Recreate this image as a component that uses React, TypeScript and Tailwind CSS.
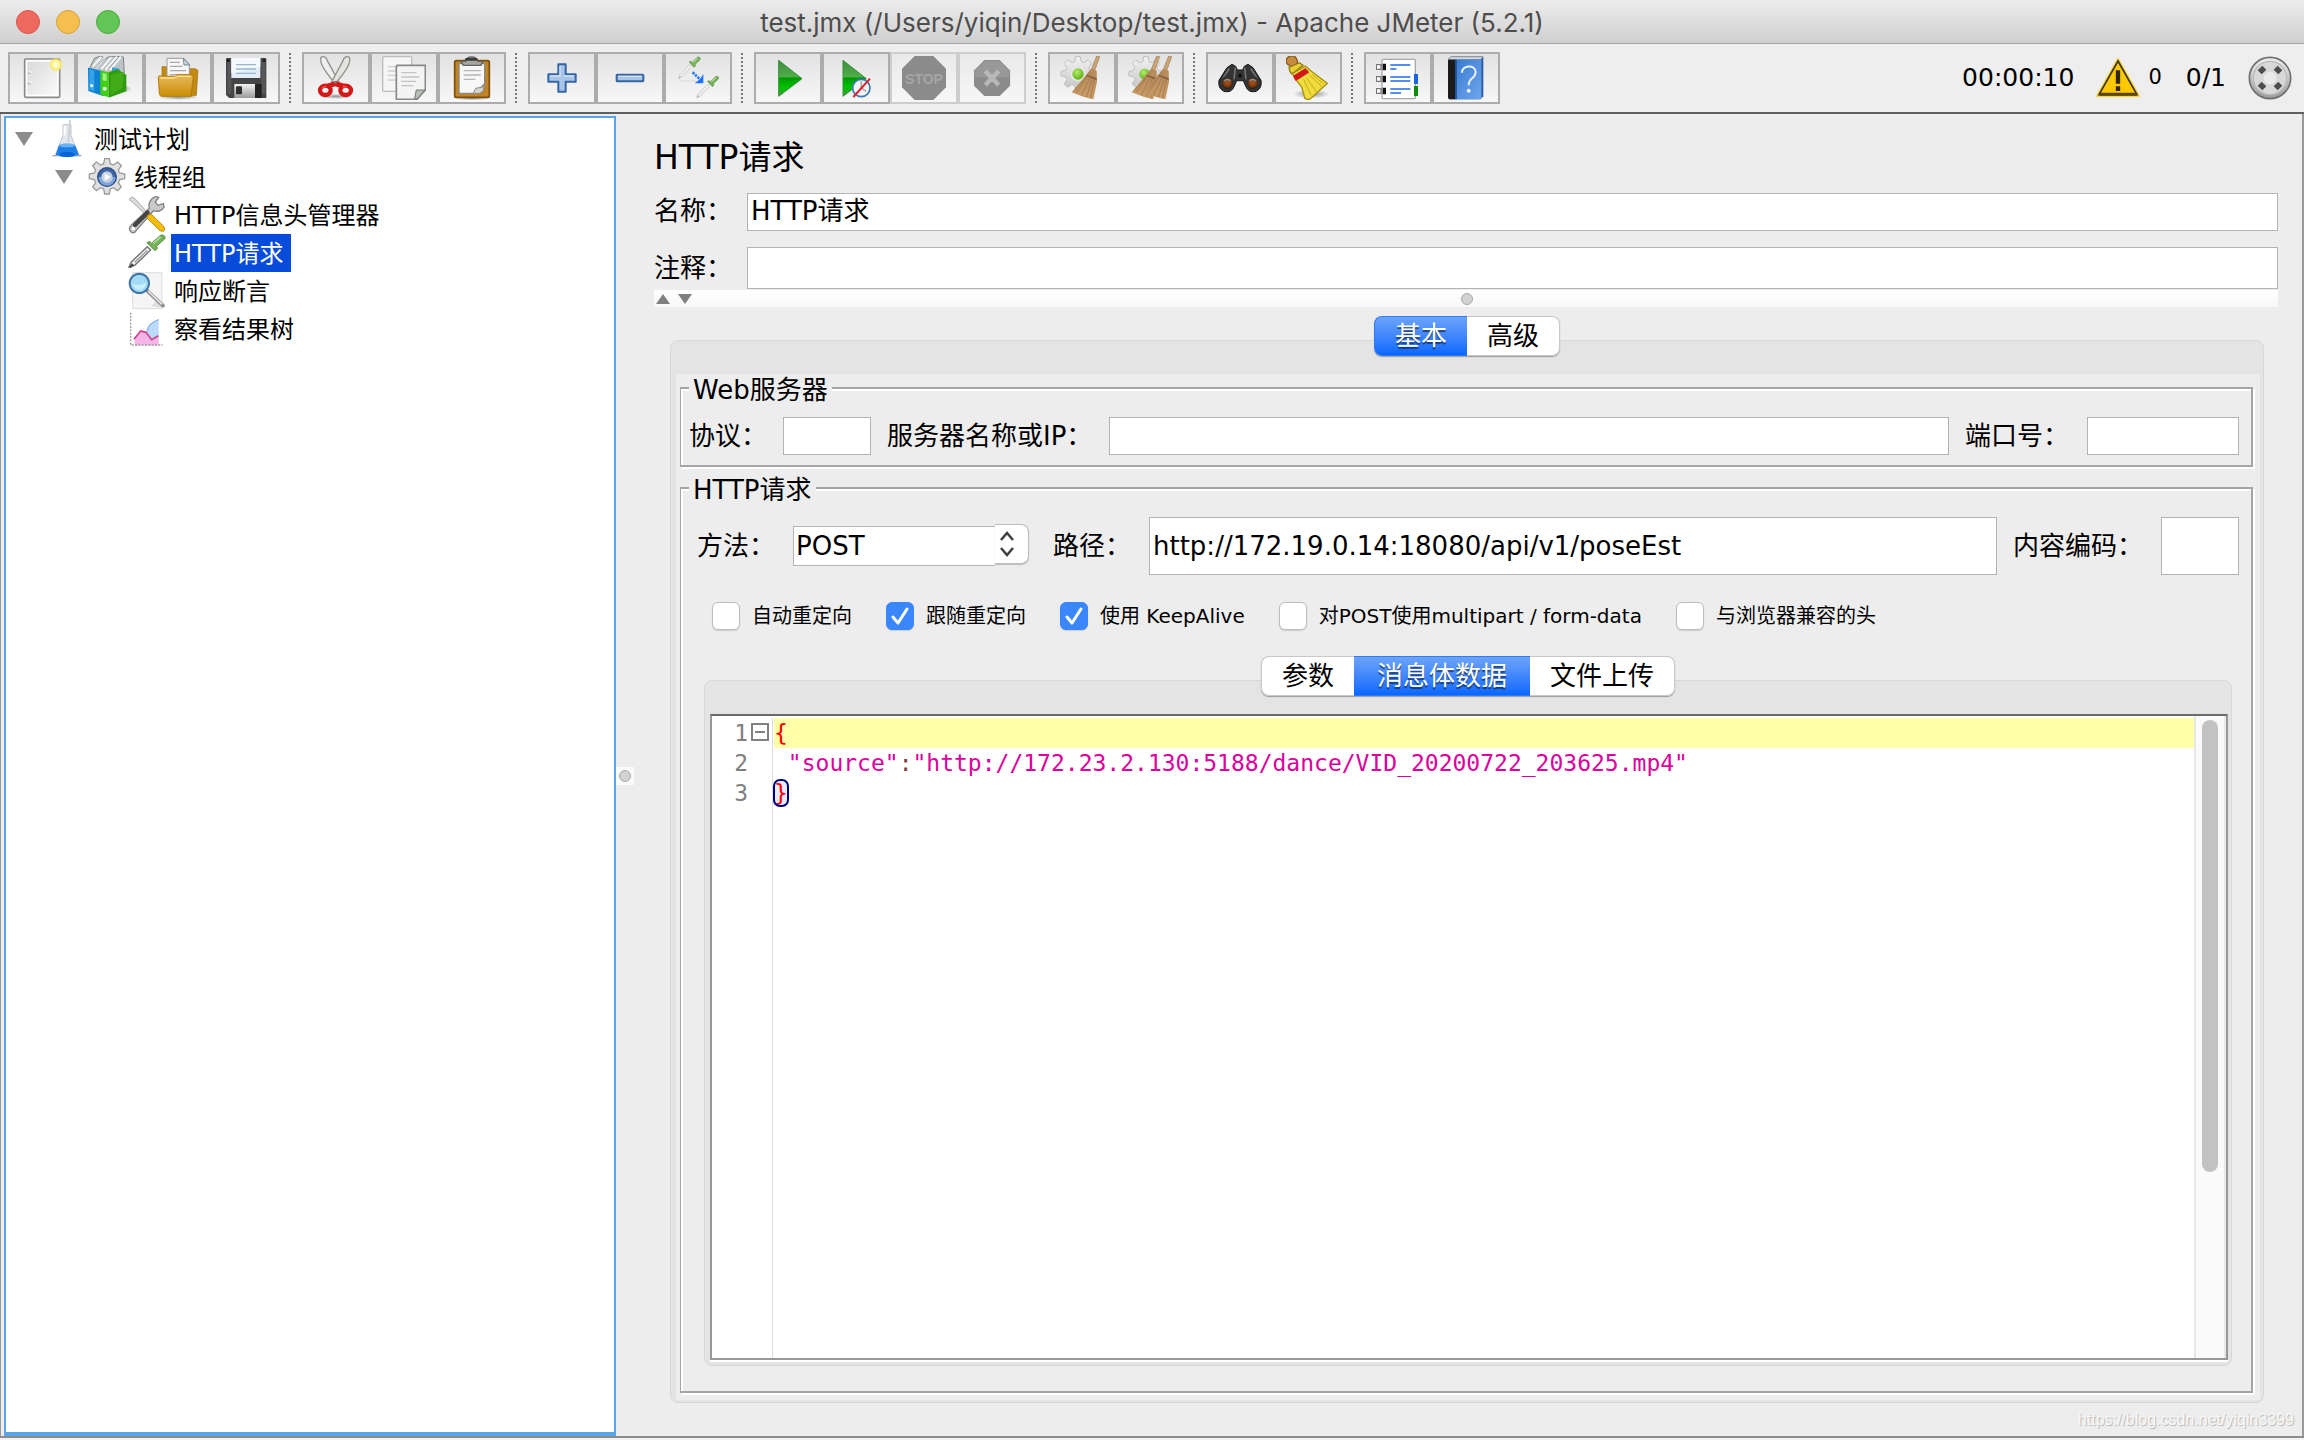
import { useState } from "react";
import type { ReactNode } from "react";

interface ToolItem {
  label: string;
  icon: ReactNode;
  disabled?: boolean;
}

interface TreeItem {
  label: string;
  indent: string;
  icon: ReactNode;
  open?: boolean;
}

const gear =
  "M50 2h14l3 15 9 4 13-9 11 11-9 13 4 9 15 3v14l-15 3-4 9 9 13-11 11-13-9-9 4-3 15H50l-3-15-9-4-13 9-11-11 9-13-4-9-15-3V48l15-3 4-9-9-13 11-11 13 9 9-4z";

const octagon = "M38 0h56l38 38v56l-38 38H38L0 94V38z";

function Svg({ children }: { children: ReactNode }) {
  return (
    <svg viewBox="0 0 132 132" className="size-11" aria-hidden="true">
      {children}
    </svg>
  );
}

// Shared gradients, referenced by id from the icons
function Gradients() {
  return (
    <svg className="absolute size-0" aria-hidden="true">
      <defs>
        <linearGradient id="paper" x1="0" y1="0" x2="1" y2="1">
          <stop offset="0" stopColor="#d9d9d9" />
          <stop offset="1" stopColor="#fafafa" />
        </linearGradient>
        <linearGradient id="folder" x1="0" y1="0" x2="0" y2="1">
          <stop offset="0" stopColor="#e9b95a" />
          <stop offset="1" stopColor="#c98f06" />
        </linearGradient>
        <linearGradient id="metal" x1="0" y1="0" x2="0" y2="1">
          <stop offset="0" stopColor="#f2f2f2" />
          <stop offset="1" stopColor="#9a9a9a" />
        </linearGradient>
        <linearGradient id="cog" x1="0" y1="0" x2="0" y2="1">
          <stop offset="0" stopColor="#f2f2f2" />
          <stop offset="1" stopColor="#c4c4c4" />
        </linearGradient>
        <linearGradient id="play" x1="0" y1="0" x2="0" y2="1">
          <stop offset="0" stopColor="#3f8a3c" />
          <stop offset="0.45" stopColor="#4fae4a" />
          <stop offset="0.5" stopColor="#009a00" />
          <stop offset="0.75" stopColor="#00c400" />
          <stop offset="1" stopColor="#3e9a36" />
        </linearGradient>
        <linearGradient id="straw" x1="0" y1="0" x2="0" y2="1">
          <stop offset="0" stopColor="#b58a5a" />
          <stop offset="1" stopColor="#c99b66" />
        </linearGradient>
        <linearGradient id="book" x1="0" y1="0" x2="1" y2="1">
          <stop offset="0" stopColor="#3a7bd0" />
          <stop offset="1" stopColor="#6ea6ee" />
        </linearGradient>
        <radialGradient id="ball" cx="0.4" cy="0.35" r="0.7">
          <stop offset="0" stopColor="#b4ee6a" />
          <stop offset="1" stopColor="#59ab10" />
        </radialGradient>
        <radialGradient id="lens" cx="0.5" cy="0.4" r="0.6">
          <stop offset="0" stopColor="#a85a22" />
          <stop offset="0.6" stopColor="#7a3a10" />
          <stop offset="1" stopColor="#1c1c1c" />
        </radialGradient>
        <radialGradient id="glow">
          <stop offset="0" stopColor="#fffef0" />
          <stop offset="0.45" stopColor="#fff9b0" />
          <stop offset="0.7" stopColor="#f7e85a" />
          <stop offset="1" stopColor="#f7e85a" stopOpacity="0" />
        </radialGradient>
        <radialGradient id="shade">
          <stop offset="0" stopColor="#000" stopOpacity="0.4" />
          <stop offset="1" stopColor="#000" stopOpacity="0" />
        </radialGradient>
      </defs>
    </svg>
  );
}

function Broom() {
  return (
    <g>
      <path d="M110 0l9 2-15 42-10-4z" fill="#c9a577" stroke="#a07c50" strokeWidth="2" />
      <path d="M93 38l17 6 1 34-11 52-30-8-35-13 29-35z" fill="url(#straw)" />
      <path d="M92 48L48 110M94 56L64 118M98 60L80 124M104 60L92 128M80 62L42 104" stroke="#9c7346" strokeWidth="2" />
      <path d="M80 58l30 12" stroke="#7d5a35" strokeWidth="4" />
    </g>
  );
}

function Pipette({ faded }: { faded?: boolean }) {
  return (
    <g>
      <path d="M3 99l7-15 48-46 10 10-48 46z" fill="#f4f4f4" stroke={faded ? "#c9c9c9" : "#707070"} strokeWidth="4" />
      <path d="M4 98l8-10 6 5-10 10z" fill={faded ? "#bbb" : "#444"} />
      <path d="M20 85l38-36" stroke={faded ? "#ddd" : "#999"} strokeWidth="4" />
      <path d="M57 26l24 24 8-8-4-5 25-22c5-9-6-15-14-10L70 28l-5-6z" fill="#77b25a" stroke="#578f3e" strokeWidth="3" />
      <path d="M76 28l22-20" stroke="#abd795" strokeWidth="6" />
    </g>
  );
}

const toolGroups: ToolItem[][] = [
  [
    {
      label: "New",
      icon: (
        <Svg>
          <rect x="14" y="9" width="105" height="115" rx="3" fill="#fff" stroke="#8b8b86" strokeWidth="5" />
          <rect x="22" y="17" width="89" height="99" fill="url(#paper)" />
          <path d="M24 51h8M24 82h8" stroke="#aaa" strokeWidth="5" />
          <path d="M28 48h6M28 79h6" stroke="#fff" strokeWidth="5" />
          <circle cx="108" cy="26" r="21" fill="url(#glow)" />
        </Svg>
      ),
    },
    {
      label: "Templates",
      icon: (
        <Svg>
          <ellipse cx="100" cy="98" rx="31" ry="13" fill="url(#shade)" />
          <path d="M6 34L20 6l20-6 12 8L68 0l38 3 3 48-44 8-60-16z" fill="#bfc3c5" stroke="#7d8589" strokeWidth="3" />
          <path d="M14 32l25-29M24 35L50 4M40 39L70 4M53 42l34-40M66 42l33-40" stroke="#f5f5f5" strokeWidth="6" />
          <path d="M23 34l25-27M61 38L91 5" stroke="#91999d" strokeWidth="3" />
          <path d="M0 35l30 7 17 4v75l-13-5-33-11z" fill="#0e82d3" />
          <path d="M4 40l15 4v62L4 101z" fill="#35a3ea" />
          <path d="M72 34l23 4v20l-23-4z" fill="#37a2e6" />
          <path d="M37 44l25 5v75l-25-8z" fill="#42cf17" />
          <path d="M62 49l26-9 27 16v50l-53 19z" fill="#2f9b0d" />
          <path d="M68 56l39-8-3 47-36 22z" fill="#48b31c" opacity=".7" />
          <path d="M44 51l12 3v22l-12-3z" fill="#a4f080" />
          <circle cx="11" cy="89" r="5" fill="#e3f6ff" />
          <circle cx="50" cy="98" r="6" fill="#e6ffe0" />
        </Svg>
      ),
    },
    {
      label: "Open",
      icon: (
        <Svg>
          <ellipse cx="68" cy="124" rx="62" ry="8" fill="url(#shade)" />
          <path d="M18 32h18v30H18zM92 38h26l8 5-5 75-20 3z" fill="#c28a10" stroke="#9a6c07" strokeWidth="2" />
          <path d="M33 7h51l16 18v45H33z" fill="#f6f6f6" stroke="#9b9b9b" strokeWidth="3" />
          <path d="M82 7l2 20h17z" fill="#c9d8df" stroke="#758891" strokeWidth="3" />
          <path d="M42 19h29M42 31h38M42 44h48M42 56h48" stroke="#aaa" strokeWidth="4" />
          <path d="M7 64c0-5 5-5 8-4l41 1 10-5h38l8 5-7 60H16c-4 0-5-6-6-10z" fill="url(#folder)" stroke="#b17c08" strokeWidth="3" />
          <path d="M13 66h39l12-5h40" fill="none" stroke="#ffdf96" strokeWidth="4" />
        </Svg>
      ),
    },
    {
      label: "Save",
      icon: (
        <Svg>
          <path d="M10 6h113q4 0 4 4v116H16l-10-9V10q0-4 4-4z" fill="#454548" />
          <path d="M10 9h12v105H10zM112 9h12v105h-12z" fill="#57575a" />
          <path d="M22 6h87v60H22z" fill="#e2edf8" />
          <path d="M22 6h87v26L22 52z" fill="#f3f9fe" />
          <path d="M36 26h60M36 39h60M36 52h60" stroke="#9bb7d0" strokeWidth="4" />
          <rect x="31" y="84" width="67" height="42" fill="url(#metal)" />
          <rect x="36" y="91" width="18" height="24" rx="3" fill="#2e2e30" />
          <path d="M93 84h20v42H93z" fill="#222" />
          <path d="M9 10h8v8H9zM116 10h8v8h-8z" fill="#19191a" />
        </Svg>
      ),
    },
  ],
  [
    {
      label: "Cut",
      icon: (
        <Svg>
          <ellipse cx="66" cy="121" rx="52" ry="8" fill="url(#shade)" />
          <path d="M21 4c8-5 17 0 19 10l35 64-11 4C49 65 13 26 21 4z" fill="#eee" stroke="#92928e" strokeWidth="4" />
          <path d="M106 4c-8-5-17 0-19 10L53 78l11 4c15-17 51-56 42-78z" fill="#e3e3e0" stroke="#92928e" strokeWidth="4" />
          <ellipse cx="34" cy="103" rx="16" ry="14" fill="none" stroke="#d31818" strokeWidth="13" />
          <ellipse cx="95" cy="103" rx="16" ry="14" fill="none" stroke="#d31818" strokeWidth="13" />
          <path d="M39 83l25-8 27 8-5 15-23-7-20 7z" fill="#d31818" />
          <path d="M24 95l12-4M86 91l12 3" stroke="#f14848" strokeWidth="5" />
          <circle cx="64" cy="79" r="4" fill="#7a7a7a" />
        </Svg>
      ),
    },
    {
      label: "Copy",
      icon: (
        <Svg>
          <rect x="2" y="2" width="87" height="104" rx="3" fill="#f5f5f5" stroke="#bdbdba" strokeWidth="4" />
          <path d="M17 32h50M17 45h40M17 58h50M17 72h40" stroke="#cfcfcf" strokeWidth="4" />
          <path d="M46 28h84v74l-25 28H43V31z" fill="#f4f4f4" stroke="#888884" strokeWidth="5" />
          <path d="M58 50h45M58 63h54M58 76h44M58 89h36" stroke="#c2c2c2" strokeWidth="4" />
          <path d="M129 102l-24 27-7-2 5-25z" fill="#b9bdb7" stroke="#777" strokeWidth="3" />
        </Svg>
      ),
    },
    {
      label: "Paste",
      icon: (
        <Svg>
          <ellipse cx="66" cy="127" rx="54" ry="6" fill="url(#shade)" />
          <rect x="14" y="14" width="104" height="110" rx="5" fill="#c08427" stroke="#7d4e09" strokeWidth="5" />
          <path d="M27 23h77v60l-28 29H27z" fill="#f7f7f7" stroke="#888" strokeWidth="4" />
          <path d="M104 83l-5 23-11 6H70l7-15 21-4z" fill="#d4d4d0" stroke="#8c8c89" strokeWidth="3" />
          <path d="M41 44h51M41 57h51M41 70h35" stroke="#b5b5b5" strokeWidth="4" />
          <path d="M33 16h14c3-18 32-18 36 0h15l-5 12H40z" fill="#a5a69f" stroke="#62635e" strokeWidth="4" />
          <path d="M49 10h30" stroke="#3b3c39" strokeWidth="8" strokeLinecap="round" />
        </Svg>
      ),
    },
  ],
  [
    {
      label: "Expand All",
      icon: (
        <Svg>
          <path d="M55 25h22v30h30v22H77v30H55V77H25V55h30z" fill="#a9c6e8" stroke="#3465a4" strokeWidth="6" strokeLinejoin="round" />
          <path d="M60 31v29H31M72 60h29" fill="none" stroke="#d3e2f4" strokeWidth="4" />
        </Svg>
      ),
    },
    {
      label: "Collapse All",
      icon: (
        <Svg>
          <rect x="26" y="56" width="80" height="20" rx="2" fill="#a9c6e8" stroke="#3465a4" strokeWidth="6" />
          <path d="M31 61h70" stroke="#d3e2f4" strokeWidth="4" />
        </Svg>
      ),
    },
    {
      label: "Toggle",
      icon: (
        <Svg>
          <path d="M10 74h53" stroke="#e3e3e3" strokeWidth="5" />
          <g transform="translate(5 1) scale(.61 .66)">
            <Pipette faded />
          </g>
          <g transform="translate(60 59) scale(.61 .66)">
            <Pipette faded />
          </g>
          <path d="M50 49l22 21" stroke="#237cf2" strokeWidth="8" strokeDasharray="7 3" />
          <path d="M82 54v28H56l10-8 9-9z" fill="#1e6fff" />
        </Svg>
      ),
    },
  ],
  [
    {
      label: "Start",
      icon: (
        <Svg>
          <path d="M38 13v108l70-53z" fill="url(#play)" stroke="#35923a" strokeWidth="3" />
        </Svg>
      ),
    },
    {
      label: "Start no pauses",
      icon: (
        <Svg>
          <path d="M27 13v108l70-53z" fill="url(#play)" stroke="#35923a" strokeWidth="3" />
          <circle cx="82" cy="96" r="26" fill="#f3f6fa" stroke="#3d79b8" strokeWidth="5" />
          <path d="M82 76v20l14 10" fill="none" stroke="#aaa" strokeWidth="5" />
          <path d="M58 123l50-55" stroke="#dd2127" strokeWidth="6" />
        </Svg>
      ),
    },
    {
      label: "Stop",
      disabled: true,
      icon: (
        <Svg>
          <path d={octagon} fill="#8b8b8b" />
          <text x="66" y="83" textAnchor="middle" fontFamily="Liberation Sans" fontWeight="bold" fontSize="42" fill="#a6a6a6">
            STOP
          </text>
        </Svg>
      ),
    },
    {
      label: "Shutdown",
      disabled: true,
      icon: (
        <Svg>
          <g transform="translate(12 12) scale(.82)">
            <path d={octagon} fill="#8b8b8b" />
            <path d="M4 64h124V38L94 4H38L4 38z" fill="#989898" />
          </g>
          <path d="M46 45l40 42M86 45L46 87" stroke="#b8b8b8" strokeWidth="14" />
        </Svg>
      ),
    },
  ],
  [
    {
      label: "Clear",
      icon: (
        <Svg>
          <path d={gear} fill="url(#cog)" stroke="#bdbdbd" strokeWidth="3" transform="translate(-1 0) scale(.96)" />
          <circle cx="54" cy="54" r="22" fill="#e8e8e8" />
          <circle cx="54" cy="54" r="17" fill="url(#ball)" />
          <Broom />
        </Svg>
      ),
    },
    {
      label: "Clear All",
      icon: (
        <Svg>
          <path d={gear} fill="url(#cog)" stroke="#bdbdbd" strokeWidth="3" transform="translate(-1 0) scale(.96)" />
          <circle cx="50" cy="54" r="16" fill="url(#ball)" />
          <g transform="translate(-24 0)">
            <Broom />
          </g>
          <g transform="translate(12 0)">
            <Broom />
          </g>
        </Svg>
      ),
    },
  ],
  [
    {
      label: "Search",
      icon: (
        <Svg>
          <path d="M27 35l15-10 11 6 5 11h16l5-11 11-6 15 10 24 38q4 24-15 33-23 6-31-16l-7-16H56l-7 16q-8 22-31 16Q-1 97 3 73z" fill="#343434" stroke="#171717" strokeWidth="3" />
          <path d="M34 37l-20 31M98 37l20 31M52 35l-4 35M80 35l4 35" stroke="#747474" strokeWidth="5" />
          <circle cx="28" cy="83" r="23" fill="#333" />
          <circle cx="104" cy="83" r="23" fill="#333" />
          <circle cx="28" cy="83" r="16" fill="url(#lens)" />
          <circle cx="104" cy="83" r="16" fill="url(#lens)" />
          <path d="M18 75q10-9 20 0M94 75q10-9 20 0" fill="none" stroke="#929292" strokeWidth="4" />
          <circle cx="66" cy="59" r="6" fill="#111" />
        </Svg>
      ),
    },
    {
      label: "Reset Search",
      icon: (
        <Svg>
          <ellipse cx="76" cy="114" rx="56" ry="14" fill="url(#shade)" />
          <path d="M4 5Q16-5 29 4q9 13 3 19l7 6-21 13-7-14C-2 25 0 12 4 5z" fill="#c68b43" stroke="#8a5a1b" strokeWidth="4" />
          <path d="M9 34L40 20l11 8-33 26-6-7z" fill="#e9cf35" stroke="#8c7b0d" strokeWidth="4" />
          <path d="M20 52l38-22 18 16 48 36-54 49-13-3-10-35-20-25z" fill="#f1dc3e" stroke="#a5900f" strokeWidth="4" />
          <path d="M70 57l37 34M61 65l30 42M53 70l22 48M79 56l34 28" stroke="#c7ac1a" strokeWidth="3" />
          <path d="M23 64l38-24M27 71l40-25" stroke="#d21919" strokeWidth="9" />
        </Svg>
      ),
    },
  ],
  [
    {
      label: "Function Helper",
      icon: (
        <Svg>
          <rect x="18" y="10" width="100" height="118" rx="3" fill="#fff" stroke="#a8a8a8" strokeWidth="4" />
          <path d="M114 54h12v30h-12z" fill="#1766e8" />
          <path d="M114 90h12v30h-12z" fill="#0b8f0b" />
          <path d="M20 23h10v20H20zM20 59h10v20H20zM20 95h10v20H20z" fill="#111" />
          <path d="M1 26h14v14H1zM1 62h14v14H1zM1 98h14v14H1z" fill="#fff" stroke="#777" strokeWidth="4" />
          <path d="M43 27h60M43 39h18M43 63h60M43 75h60M43 99h60M43 111h32" stroke="#1b6bea" strokeWidth="5" />
        </Svg>
      ),
    },
    {
      label: "Help",
      icon: (
        <Svg>
          <path d="M14 8l8-6h96v119l-9 9H14z" fill="#2c5da5" />
          <path d="M14 8l8-6h94l-5 9H14z" fill="#d3d7dc" stroke="#6a7480" strokeWidth="2" />
          <path d="M12 11h26v119H16l-4-5z" fill="#1b1b1d" />
          <path d="M34 11h78v119H34z" fill="url(#book)" />
          <path d="M36 12v117" stroke="#1e4e92" strokeWidth="5" />
          <path d="M54 50c0-24 41-25 41-2 0 20-21 16-21 40" fill="none" stroke="#e9f2fd" strokeWidth="6" />
          <circle cx="74" cy="104" r="6" fill="#e9f2fd" />
        </Svg>
      ),
    },
  ],
];

const treeItems: TreeItem[] = [
  {
    label: "测试计划",
    indent: "pl-[9px]",
    open: true,
    icon: (
      <svg viewBox="0 0 114 114" className="size-[38px]" aria-hidden="true">
        <path d="M14 107h86" stroke="#9aa3ad" strokeWidth="4" />
        <path d="M45 14h24v32l22 57q-35 15-68 0l22-57z" fill="#e4e8ee" stroke="#bfc6cf" strokeWidth="3" />
        <path d="M33 75h48l12 29q-36 14-70 0z" fill="#1f7fe8" />
        <ellipse cx="57" cy="76" rx="25" ry="6" fill="#6db2f5" />
        <ellipse cx="57" cy="103" rx="23" ry="8" fill="#0663d8" />
        <path d="M66 0l-5 66" stroke="#cdcdcd" strokeWidth="5" />
        <path d="M50 18v28" stroke="#fff" strokeWidth="6" />
      </svg>
    ),
  },
  {
    label: "线程组",
    indent: "pl-[49px]",
    open: true,
    icon: (
      <svg viewBox="0 0 114 114" className="size-[38px]" aria-hidden="true">
        <path d={gear} fill="#e0e0e0" stroke="#9c9c9c" strokeWidth="4" />
        <circle cx="57" cy="57" r="28" fill="#3d63a3" />
        <path d="M29 57a28 28 0 0 0 56 0z" fill="#7fa6dc" />
        <circle cx="57" cy="57" r="17" fill="#c8d3e2" />
        <path d="M50 46l18 11-18 11z" fill="#fff" />
        <circle cx="57" cy="57" r="28" fill="none" stroke="#2c4d85" strokeWidth="4" />
      </svg>
    ),
  },
  {
    label: "HTTP信息头管理器",
    indent: "pl-[122px]",
    icon: (
      <svg viewBox="0 0 114 114" className="size-[38px]" aria-hidden="true">
        <path d="M3 10l8-7 10 5 43 48-5 6L14 19z" fill="#dadada" stroke="#a9a9a9" strokeWidth="3" />
        <path d="M6 104c-4-7 0-13 5-18l53-49c-4-15 4-31 19-35l9 2-10 14 7 10 17-5 2 11c-7 11-20 15-31 10L25 103c-5 9-13 11-19 1z" fill="#c9c9c9" stroke="#828282" strokeWidth="4" />
        <path d="M21 87l38-37" stroke="#444" strokeWidth="13" strokeLinecap="round" />
        <path d="M59 58l11-3 37 36q7 9 0 14-7 3-13-3L57 66z" fill="#f5bd08" stroke="#bd8d06" strokeWidth="3" />
        <circle cx="16" cy="98" r="5" fill="#fff" />
      </svg>
    ),
  },
  {
    label: "HTTP请求",
    indent: "pl-[122px]",
    icon: (
      <svg viewBox="0 0 114 114" className="size-[38px]" aria-hidden="true">
        <Pipette />
      </svg>
    ),
  },
  {
    label: "响应断言",
    indent: "pl-[122px]",
    icon: (
      <svg viewBox="0 0 114 114" className="size-[38px]" aria-hidden="true">
        <path d="M14 2h88v108H14z" fill="#f5f5f5" stroke="#dedede" strokeWidth="3" />
        <path d="M70 102l15-16 18 22z" fill="#ddd" />
        <path d="M58 57l47 44" stroke="#8c8c8c" strokeWidth="11" strokeLinecap="round" />
        <path d="M60 57l42 40" stroke="#e8e8e8" strokeWidth="5" />
        <circle cx="34" cy="34" r="29" fill="#a3daf5" stroke="#3f74a6" strokeWidth="6" />
        <path d="M14 35q20 10 40-3a20 20 0 0 1-40 3z" fill="#c9effd" />
      </svg>
    ),
  },
  {
    label: "察看结果树",
    indent: "pl-[122px]",
    icon: (
      <svg viewBox="0 0 114 114" className="size-[38px]" aria-hidden="true">
        <path d="M20 86l20-24 14 3 18 25 20-12v28H20z" fill="#f5b4e6" />
        <path d="M57 66c2-20 14-30 35-37v51L72 91z" fill="#bcdafc" />
        <path d="M57 66c2-20 14-30 35-37" fill="none" stroke="#8ab6ee" strokeWidth="4" />
        <path d="M18 88l20-25 16 4 17 22 20-12" fill="none" stroke="#ce4487" strokeWidth="5" />
        <path d="M8 8v97h96" fill="none" stroke="#9d9d9d" strokeWidth="4" strokeDasharray="6 4" />
      </svg>
    ),
  },
];

const field = "min-w-0 border border-[#b4b4b4] bg-white px-[3px] text-[26px] outline-none";
const etched =
  "min-w-0 border-2 border-l border-[#a4a4a4] shadow-[2px_2px_0_#fff,inset_2px_2px_0_#fff]";

function Toolbar() {
  return (
    <div className="flex h-[70px] items-center border-b-2 border-[#5f5f5f] bg-[#eee] pr-3 pb-2 pl-2 pt-2">
      {toolGroups.map((group, i) => (
        <div key={i} className="flex items-center">
          {i > 0 && <span className="mr-[11px] ml-[9px] h-[50px] border-l-2 border-dotted border-[#777]" />}
          {group.map((item) => (
            <button
              key={item.label}
              aria-label={item.label}
              disabled={item.disabled}
              className="flex h-[52px] w-[68px] items-center justify-center border-2 border-[#acacac] bg-linear-to-b from-[#e2e2e2] to-[#f7f7f7] disabled:border-[#cdcdcd] disabled:from-[#e9e9e9]"
            >
              {item.icon}
            </button>
          ))}
        </div>
      ))}
      <div className="ml-auto flex items-center text-[25px]">
        <span>00:00:10</span>
        <button aria-label="Log errors" className="mr-6 ml-[22px] flex items-center gap-2 text-[21px]">
          <svg viewBox="0 0 132 120" className="h-10 w-11" aria-hidden="true">
            <path d="M66 4l62 110H4z" fill="#fbc90a" stroke="#f5d64f" strokeWidth="8" strokeLinejoin="round" />
            <path d="M66 9l57 101H9z" fill="#fcc803" stroke="#3d350c" strokeWidth="5" />
            <path d="M10 109h112" stroke="#5a4708" strokeWidth="9" />
            <path d="M66 37v40M66 85v14" stroke="#2d2607" strokeWidth="13" />
          </svg>
          <span>0</span>
        </button>
        <span className="mr-[22px]">0/1</span>
        <svg viewBox="0 0 132 132" className="size-11" aria-hidden="true">
          <circle cx="66" cy="66" r="62" fill="url(#metal)" stroke="#6f6f6f" strokeWidth="5" />
          <circle cx="66" cy="66" r="50" fill="#d8d8d8" stroke="#bababa" strokeWidth="4" />
          <path d="M35 49l14-14M83 35l14 14M35 83l14 14M97 83L83 97" stroke="#4d4d4d" strokeWidth="17" />
          <circle cx="66" cy="66" r="19" fill="#e9e9e9" />
        </svg>
      </div>
    </div>
  );
}

function Tree() {
  const [selected, setSelected] = useState("HTTP请求");
  return (
    <nav className="w-[612px] shrink-0 border-2 border-b-4 border-[#56a5e8] bg-white pt-0.5 text-2xl">
      {treeItems.map((item) => (
        <div key={item.label} className={`flex h-[38px] items-center ${item.indent}`}>
          {item.open && (
            <svg viewBox="0 0 18 14" className="mr-[15px] h-3.5 w-[18px]" aria-hidden="true">
              <path d="M0 0h18L9 14z" fill="#8b8b8b" />
            </svg>
          )}
          {item.icon}
          <button
            onClick={() => setSelected(item.label)}
            className={`ml-[5px] h-[38px] pt-0.5 pr-2 pl-[3px] leading-9 ${
              selected === item.label ? "bg-[#074bdb] text-white" : ""
            }`}
          >
            {item.label}
          </button>
        </div>
      ))}
    </nav>
  );
}

function Tabs({ names, initial }: { names: string[]; initial: string }) {
  const [active, setActive] = useState(initial);
  return (
    <div role="tablist" className="relative z-10 flex h-10 self-center rounded-lg shadow-[0_1px_1px_#999]">
      {names.map((name) => (
        <button
          key={name}
          role="tab"
          aria-selected={active === name}
          onClick={() => setActive(name)}
          className={`border-y px-[23px] text-[26px] leading-9 first:rounded-l-lg first:border-l first:px-5 last:rounded-r-lg last:border-r last:px-5 ${
            active === name
              ? "border-[#2f7cf6] bg-linear-to-b from-[#6ba3fa] to-[#0567fd] text-white text-shadow-[0_2px_1px_#0008]"
              : "border-[#c8c8c8] bg-white"
          }`}
        >
          {name}
        </button>
      ))}
    </div>
  );
}

function CheckOption({ id, label, defaultChecked }: { id: string; label: string; defaultChecked?: boolean }) {
  const [checked, setChecked] = useState(!!defaultChecked);
  return (
    <label htmlFor={id} className="flex items-center gap-3 text-xl leading-7">
      <span className="relative flex size-7">
        <input
          id={id}
          type="checkbox"
          checked={checked}
          onChange={(e) => setChecked(e.target.checked)}
          className="size-7 appearance-none rounded-md border border-[#bdbdbd] bg-white shadow-[0_1px_1px_#ccc] checked:border-[#3a86fb] checked:bg-[#3a86fb]"
        />
        {checked && (
          <svg viewBox="0 0 28 28" className="pointer-events-none absolute inset-0" aria-hidden="true">
            <path d="M7 15l5 6 9-14" fill="none" stroke="#fff" strokeWidth="3" strokeLinecap="round" strokeLinejoin="round" />
          </svg>
        )}
      </span>
      {label}
    </label>
  );
}

function Editor() {
  return (
    <div className="flex flex-1 border-2 border-[#989898] border-t-[#6a6a6a] bg-white pt-0.5 font-['DejaVu_Sans_Mono','Liberation_Mono',monospace] text-[23px] leading-[30px] shadow-[0_2px_0_#fff]">
      <div className="flex w-[61px] border-r border-[#ddd] text-[#808080]">
        <div className="w-9 text-right">
          <div>1</div>
          <div>2</div>
          <div>3</div>
        </div>
        <button aria-label="Fold" className="mt-[5px] ml-[3px] flex size-[18px] items-center justify-center border-2 border-[#808080]">
          <span className="h-0.5 w-2.5 bg-[#808080]" />
        </button>
      </div>
      <div
        role="textbox"
        aria-label="消息体数据"
        contentEditable
        suppressContentEditableWarning
        spellCheck={false}
        className="flex-1 pl-px whitespace-pre outline-none"
      >
        <div className="bg-[#ffffaa] text-[#ff0000]">{"{"}</div>
        <div className="text-[#dc009c]">
          {' "source"'}
          <span className="text-[#804040]">:</span>
          {'"http://172.23.2.130:5188/dance/VID_20200722_203625.mp4"'}
        </div>
        <div className="text-[#ff0000]">
          <span className="rounded-md bg-[#eaeaff] outline-2 -outline-offset-1 outline-[#000080]">{"}"}</span>
        </div>
      </div>
      <div className="-mt-0.5 w-8 border-x-2 border-[#e8e8e8] bg-[#fafafa] pt-1 pl-1.5">
        <div className="h-[452px] w-4 rounded-full bg-[#c2c2c2]" />
      </div>
    </div>
  );
}

export default function App() {
  const [name, setName] = useState("HTTP请求");
  const [comment, setComment] = useState("");
  const [path, setPath] = useState("http://172.19.0.14:18080/api/v1/poseEst");

  return (
    <div className="flex h-screen flex-col bg-[#ededed] font-['DejaVu_Sans','Noto_Sans_CJK_SC',sans-serif] text-black">
      <Gradients />

      {/* Title bar */}
      <header className="relative flex h-11 shrink-0 items-center rounded-t-lg border-b border-[#a5a5a5] bg-linear-to-b from-[#ececec] to-[#d0d0d0] pl-4">
        <div className="flex gap-4">
          <button aria-label="Close" className="size-6 rounded-full border border-[#d6564c] bg-[#ee6a5f]" />
          <button aria-label="Minimize" className="size-6 rounded-full border border-[#d9a13b] bg-[#f5bf4f]" />
          <button aria-label="Zoom" className="size-6 rounded-full border border-[#4fa73f] bg-[#61c655]" />
        </div>
        <h1 className="absolute inset-x-0 pt-0.5 text-center font-['Inter',sans-serif] text-[26px] text-[#4d4d4d]">
          test.jmx (/Users/yiqin/Desktop/test.jmx) - Apache JMeter (5.2.1)
        </h1>
      </header>

      <Toolbar />

      <div className="flex min-h-0 flex-1 border-r-2 border-l border-[#999] pt-0.5 pl-[3px]">
        <Tree />

        {/* Divider handle */}
        <div className="flex w-[18px] shrink-0 items-center justify-center">
          <span className="flex size-[18px] items-center justify-center bg-[#fafafa]">
            <span className="size-3 rounded-full border border-[#aaa] bg-[#d2d2d2]" />
          </span>
        </div>

        <main className="flex min-w-0 flex-1 flex-col pr-6 pb-[33px] pl-5">
          <h2 className="mt-[22px] mb-[14px] text-[33px] leading-10">HTTP请求</h2>
          <div className="flex items-center">
            <label htmlFor="name" className="w-[93px] text-[26px]">
              名称：
            </label>
            <input id="name" className={`h-[38px] flex-1 ${field}`} value={name} onChange={(e) => setName(e.target.value)} />
          </div>
          <div className="mt-4 flex items-center">
            <label htmlFor="comment" className="w-[93px] text-[26px]">
              注释：
            </label>
            <input id="comment" className={`h-[42px] flex-1 ${field}`} value={comment} onChange={(e) => setComment(e.target.value)} />
          </div>

          <div className="mt-px flex h-[17px] items-center bg-linear-to-b from-white to-[#f8f8f8] pl-0.5">
            <svg viewBox="0 0 38 10" className="h-2.5 w-[38px]" aria-hidden="true">
              <path d="M0 10L7 0l7 10zM22 0h14l-7 10z" fill="#808080" />
            </svg>
            <span className="mx-auto size-3 rounded-full border border-[#aaa] bg-[#d2d2d2]" />
            <span className="w-[38px]" />
          </div>

          <div className="mt-[9px] mr-[14px] ml-4 flex flex-1 flex-col">
            <Tabs names={["基本", "高级"]} initial="基本" />
            <div className="-mt-4 flex flex-1 flex-col rounded-lg border border-[#d8d8d8] bg-[#e4e4e4] pt-[33px] pr-[3px] pb-0.5 pl-[5px]">
              <div className="flex flex-1 flex-col gap-[7px] bg-[#ededed] pr-[7px] pb-[7px] pl-1">
                <fieldset className={etched}>
                  <legend className="ml-2 bg-[#ededed] px-1 pt-1 text-[26px] leading-6">Web服务器</legend>
                  <div className="flex items-center pt-[15px] pr-3 pb-[10px] pl-2 text-[26px]">
                    <label htmlFor="protocol" className="w-[94px] shrink-0 leading-[38px]">
                      协议：
                    </label>
                    <input id="protocol" className={`h-[38px] w-[88px] ${field}`} />
                    <label htmlFor="server" className="ml-4 w-[222px] shrink-0 leading-[38px]">
                      服务器名称或IP：
                    </label>
                    <input id="server" className={`h-[38px] flex-1 ${field}`} />
                    <label htmlFor="port" className="ml-4 w-[122px] shrink-0 leading-[38px]">
                      端口号：
                    </label>
                    <input id="port" className={`h-[38px] w-[152px] ${field}`} />
                  </div>
                </fieldset>

                <fieldset className={`flex-1 ${etched}`}>
                  <legend className="ml-2 bg-[#ededed] px-1 pt-1 text-[26px] leading-6">HTTP请求</legend>
                  <div className="flex h-full flex-col pt-[15px] pb-[25px]">
                    <div className="flex items-center pr-3 pl-4 text-[26px]">
                      <label htmlFor="method" className="w-24 shrink-0">
                        方法：
                      </label>
                      <div className="relative flex w-[236px] shrink-0">
                        <span className="absolute inset-y-0 right-[34px] left-0 border border-r-0 border-[#b4b4b4] bg-white" />
                        <span className="absolute -top-0.5 right-0 flex h-10 w-[34px] items-center rounded-r-lg border border-l-0 border-[#bdbdbd] bg-white pl-1 shadow-[0_1px_1px_#bbb]">
                          <svg viewBox="0 0 16 28" className="h-7 w-4" aria-hidden="true">
                            <path d="M2 10l6-7 6 7M2 18l6 7 6-7" fill="none" stroke="#404040" strokeWidth="2.5" />
                          </svg>
                        </span>
                        <select
                          id="method"
                          defaultValue="POST"
                          className="relative h-10 w-full appearance-none bg-transparent pl-[3px] outline-none"
                        >
                          <option>GET</option>
                          <option>POST</option>
                          <option>PUT</option>
                          <option>DELETE</option>
                        </select>
                      </div>
                      <label htmlFor="path" className="ml-6 w-24 shrink-0">
                        路径：
                      </label>
                      <input id="path" className={`h-[58px] flex-1 ${field}`} value={path} onChange={(e) => setPath(e.target.value)} />
                      <label htmlFor="encoding" className="ml-4 w-[148px] shrink-0">
                        内容编码：
                      </label>
                      <input id="encoding" className={`h-[58px] w-[78px] ${field}`} />
                    </div>

                    <div className="mt-[27px] flex gap-[34px] pl-[31px]">
                      <CheckOption id="auto" label="自动重定向" />
                      <CheckOption id="follow" label="跟随重定向" defaultChecked />
                      <CheckOption id="keepalive" label="使用 KeepAlive" defaultChecked />
                      <CheckOption id="multipart" label="对POST使用multipart / form-data" />
                      <CheckOption id="compat" label="与浏览器兼容的头" />
                    </div>

                    <div className="mt-[26px] mr-[19px] ml-[23px] flex flex-1 flex-col">
                      <Tabs names={["参数", "消息体数据", "文件上传"]} initial="消息体数据" />
                      <div className="-mt-4 flex flex-1 flex-col rounded-lg border border-[#d8d8d8] bg-[#e4e4e4] pt-[33px] pr-[3px] pb-[5px] pl-[5px]">
                        <Editor />
                      </div>
                    </div>
                  </div>
                </fieldset>
              </div>
            </div>
          </div>
        </main>
      </div>

      <footer className="h-1 shrink-0 border-t-2 border-[#8c8c8c] bg-[#f4f4f4]" />
      <span className="absolute right-2.5 bottom-2 font-['Liberation_Sans',sans-serif] text-base text-[#f8f8f8] text-shadow-[1px_1px_1px_#b5b5b5]">
        https://blog.csdn.net/yiqin3399
      </span>
    </div>
  );
}
